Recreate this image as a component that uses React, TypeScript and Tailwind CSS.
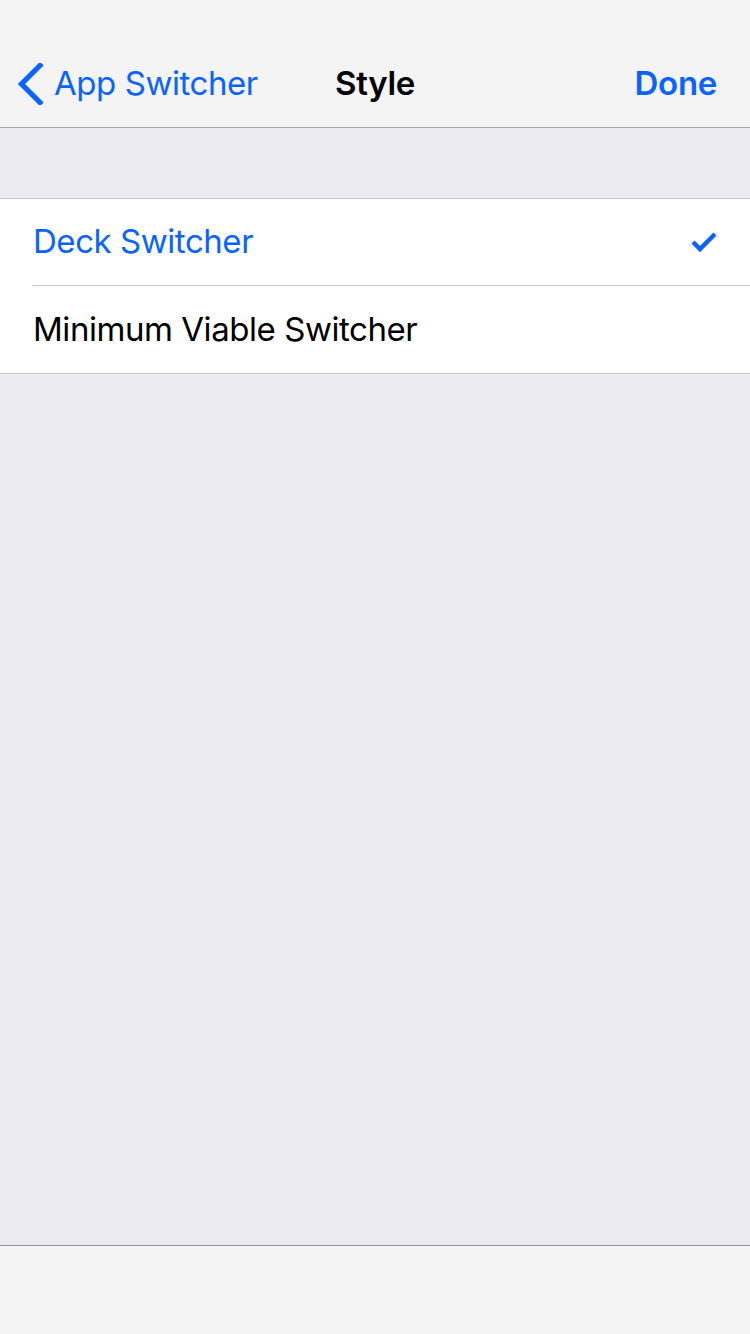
import React from "react";

export default function App() {
  const font = { fontFamily: "Inter, 'Noto Sans', sans-serif" };
  return (
    <div className="w-[750px] h-[1334px] flex flex-col bg-[#ebebf1]" style={font}>
      <div className="h-[128px] shrink-0 bg-[#f4f4f5] border-b border-[#a8a8ac] flex items-end">
        <div className="h-[86px] w-full flex items-center relative">
          <div className="flex items-center pl-[16px] gap-[10px] text-[#0b63ff] text-[33px] tracking-[-0.45px]">
            <svg width="28" height="42" viewBox="0 0 28 42">
              <path d="M24 2.5 L5.5 21 L24 39.5" fill="none" stroke="#0b63ff" strokeWidth="5.2" strokeLinecap="square" />
            </svg>
            <span>App Switcher</span>
          </div>
          <div className="absolute left-0 right-0 text-center text-[33px] font-semibold text-black pointer-events-none tracking-[-0.3px]">Style</div>
          <div className="ml-auto pr-[33px] text-[33px] font-semibold text-[#0b63ff] tracking-[-0.3px]">Done</div>
        </div>
      </div>
      <div className="h-[70px] shrink-0" />
      <div className="bg-white border-t border-b border-[#c8c7cc]">
        <div className="pl-[33px]">
          <div className="h-[87px] flex items-center pr-[32px] border-b border-[#c8c7cc]">
            <span className="text-[33px] text-[#0b63ff] tracking-[-0.45px]">Deck Switcher</span>
            <svg className="ml-auto" width="28" height="22" viewBox="0 0 28 22">
              <path d="M3 11 L10 18 L25 3" fill="none" stroke="#0b63ff" strokeWidth="4.5" />
            </svg>
          </div>
        </div>
        <div className="h-[87px] flex items-center pl-[33px]">
          <span className="text-[33px] text-black tracking-[-0.45px]">Minimum Viable Switcher</span>
        </div>
      </div>
      <div className="flex-1" />
      <div className="h-[89px] shrink-0 bg-[#f4f4f5] border-t border-[#929296]" />
    </div>
  );
}
